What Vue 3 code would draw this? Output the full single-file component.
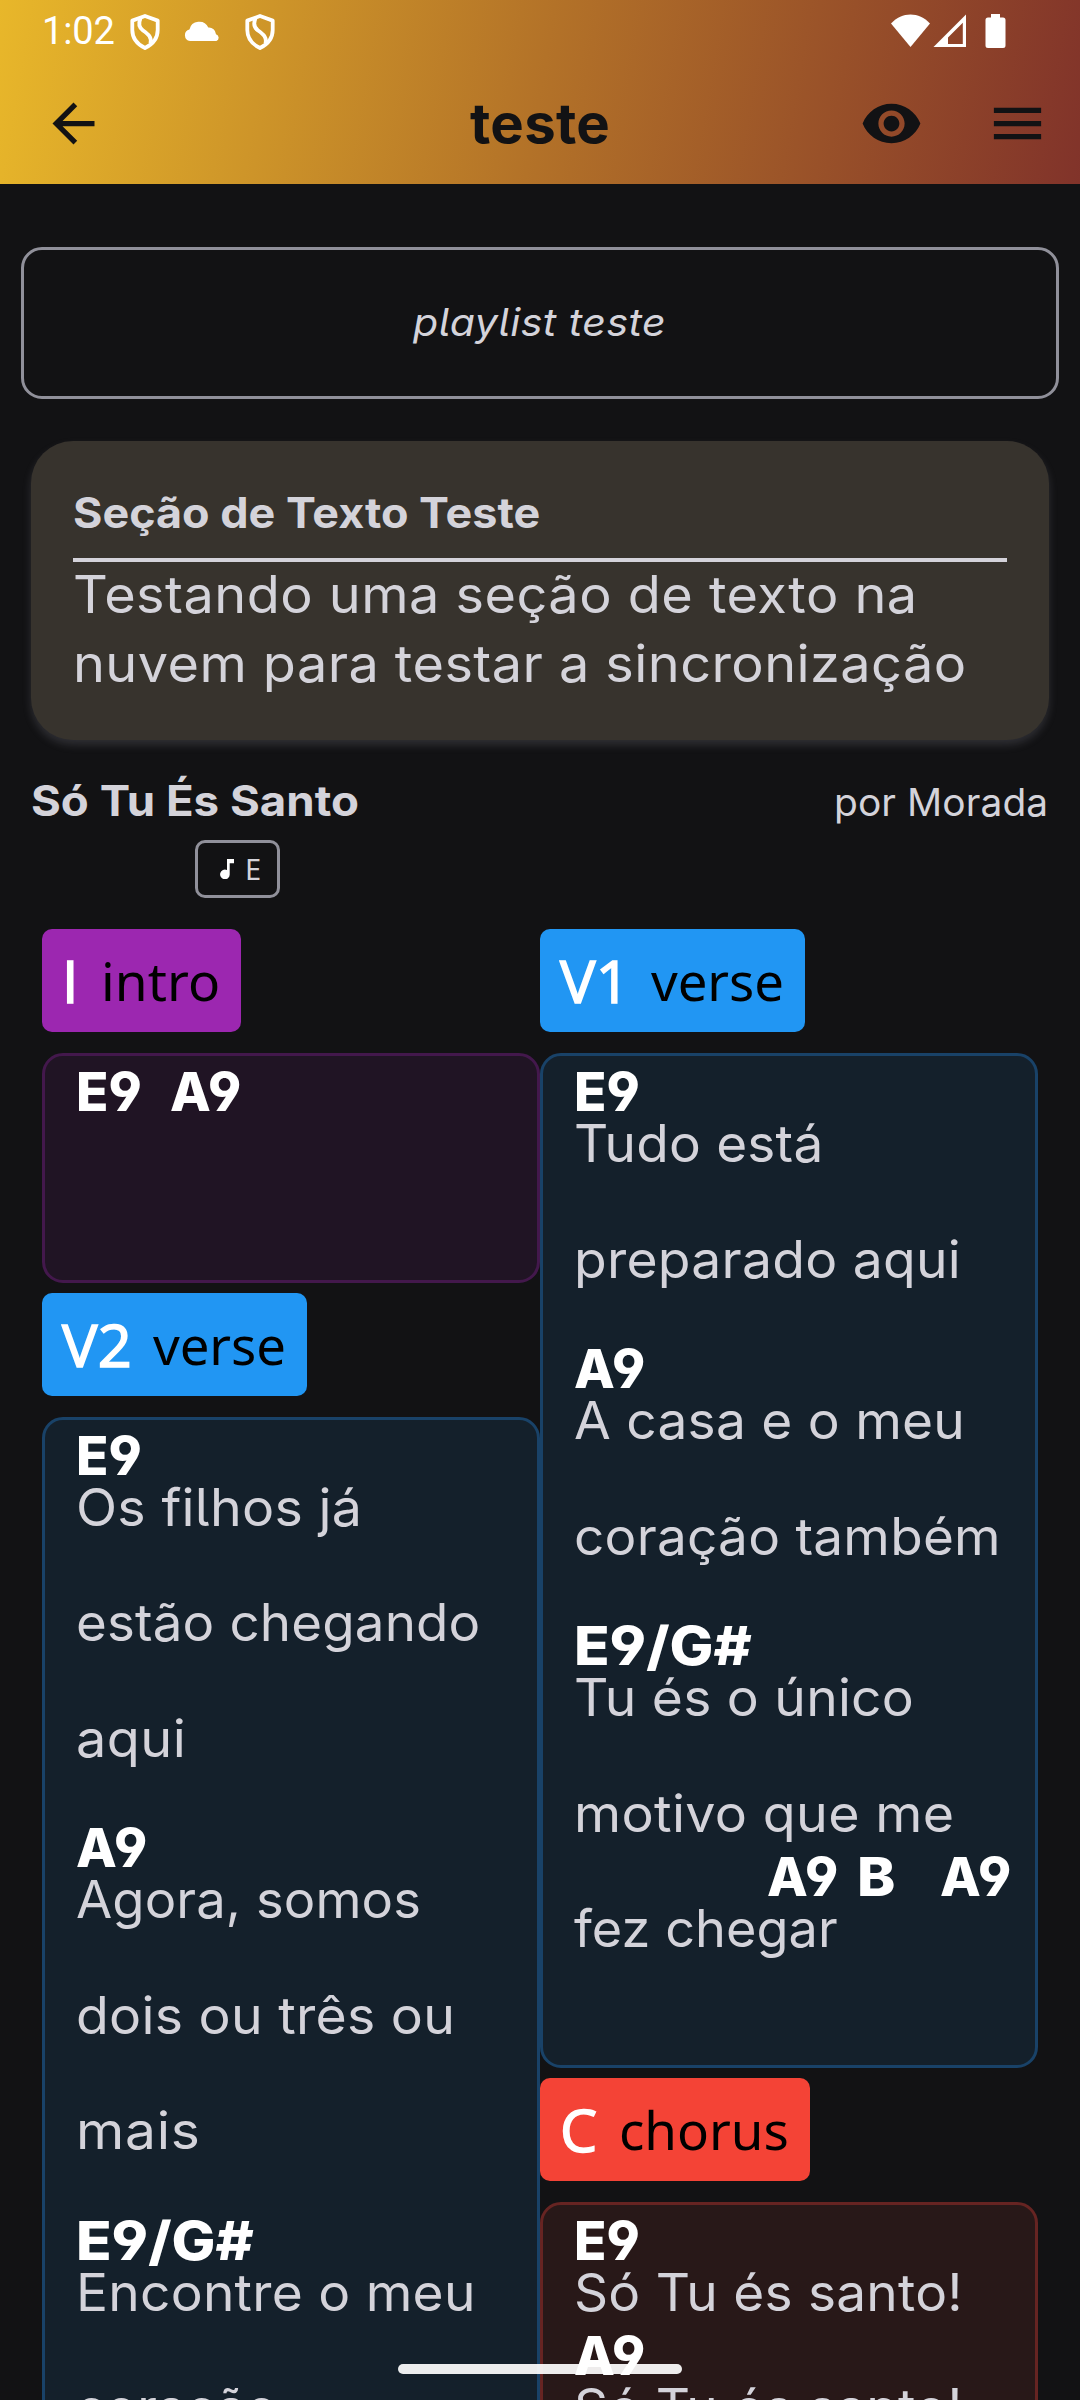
<script setup>
// Fits a line of text to the given glyph span in pixels. Part of the
// difference is taken by the glyph width, the rest by the tracking.
const canvas = document.createElement('canvas').getContext('2d')
const vFit = {
  mounted(el, { value, modifiers }) {
    if (!value) return
    const text = el.textContent.trim()
    const cs = getComputedStyle(el)
    canvas.font = `${cs.fontStyle} ${cs.fontWeight} ${cs.fontSize} ${cs.fontFamily}`
    const m = canvas.measureText(text)
    const bearings = m.width - (m.actualBoundingBoxRight + m.actualBoundingBoxLeft)
    const advance = el.getBoundingClientRect().width
    const ink = advance - bearings
    const share = text.length === 1 || modifiers.wide ? 1 : modifiers.track ? 0 : 0.75
    const scale = 1 + (value / ink - 1) * share
    const spacing = text.length === 1 ? 0 : (value / scale - ink) / (text.length - 1)
    const box = advance + spacing * text.length
    el.style.letterSpacing = `${spacing.toFixed(3)}px`
    el.style.transform = `scaleX(${scale.toFixed(4)})`
    el.style.marginRight = `${(box * (scale - 1) - spacing * scale).toFixed(3)}px`
  },
}

const E9 = { name: 'E9', width: 61.5, gap: 0 }
const A9 = { name: 'A9', width: 69, gap: 0 }
const E9G = { name: 'E9/G#', width: 174.5, gap: 0 }
const row = (lyric, width, chords = []) => ({ lyric, width, chords })

const columns = [
  [
    {
      code: 'I', codeWidth: 0, name: 'intro', nameWidth: 113, tone: 'purple', size: 199,
      paragraphs: [[row('', 0, [E9, { ...A9, gap: 28 }])]],
    },
    {
      code: 'V2', codeWidth: 67, name: 'verse', nameWidth: 131, tone: 'blue', size: 265,
      paragraphs: [
        [row('Os filhos já', 279.5, [E9]), row('estão chegando', 400), row('aqui', 105)],
        [row('Agora, somos', 341.5, [A9]), row('dois ou três ou', 373), row('mais', 117)],
        [row('Encontre o meu', 391.5, [E9G]), row('coração', 197)],
      ],
    },
  ],
  [
    {
      code: 'V1', codeWidth: 57, name: 'verse', nameWidth: 131, tone: 'blue', size: 265,
      paragraphs: [
        [row('Tudo está', 244, [E9]), row('preparado aqui', 380)],
        [row('A casa e o meu', 386, [A9]), row('coração também', 421)],
        [
          row('Tu és o único', 335.5, [E9G]),
          row('motivo que me', 373.5),
          row('fez chegar', 263, [{ ...A9, gap: 193 }, { name: 'B', width: 33.5, gap: 19 }, { ...A9, gap: 44 }]),
        ],
      ],
    },
    {
      code: 'C', codeWidth: 0, name: 'chorus', nameWidth: 165.5, tone: 'red', size: 270,
      paragraphs: [[row('Só Tu és santo!', 382.5, [E9]), row('Só Tu és santo!', 382.5, [A9])]],
    },
  ],
]
</script>

<template>
  <div class="screen">
    <header class="header">
      <div class="status">
        <div class="time"><span v-fit.track="68.5">1:02</span></div>
        <svg class="shield" viewBox="0 0 30 36">
          <path d="M15 2 2.300 6.600V16c0 8 5 14.300 12.700 18C22.700 30.300 27.700 24 27.700 16V6.600Z" />
          <path d="M10.500 4.500C8 10 9 13.500 13 16.500c5.500 4 9 6.500 7.500 13" />
        </svg>
        <svg class="cloud" viewBox="0 0 36 20">
          <path d="M6 20a5.800 5.800 0 0 1-.6-11.400A10 10 0 0 1 24.300 6.600 7 7 0 0 1 32 13.200 3.600 3.600 0 0 1 32.400 20Z" />
        </svg>
        <svg class="shield" viewBox="0 0 30 36">
          <path d="M15 2 2.300 6.600V16c0 8 5 14.300 12.700 18C22.700 30.300 27.700 24 27.700 16V6.600Z" />
          <path d="M10.500 4.500C8 10 9 13.500 13 16.500c5.500 4 9 6.500 7.500 13" />
        </svg>
        <svg class="system" viewBox="0 0 115 35">
          <path d="M0 9.500C11-2.500 28-2.500 39 9.500L19.500 33Z" />
          <path fill-rule="evenodd" d="M42.500 33 75 .500V33ZM57 23.500V30H71.800V8.700Z" />
          <path d="M100 0h9v3.500h3a2.500 2.500 0 0 1 2.500 2.500v25.500a2.500 2.500 0 0 1-2.500 2.500H97a2.500 2.500 0 0 1-2.500-2.500V6A2.500 2.500 0 0 1 97 3.500h3Z" />
        </svg>
      </div>
      <div class="toolbar">
        <svg class="icon" viewBox="0 0 24 24">
          <path d="M20 11H7.830l5.590-5.590L12 4l-8 8 8 8 1.410-1.410L7.830 13H20v-2z" />
        </svg>
        <h1 class="title"><span v-fit="138">teste</span></h1>
        <div class="actions">
          <svg class="icon" viewBox="0 0 24 24">
            <path d="M12 4.500C7 4.500 2.730 7.610 1 12c1.730 4.390 6 7.500 11 7.500s9.270-3.110 11-7.500c-1.730-4.390-6-7.500-11-7.500zM12 17c-2.760 0-5-2.240-5-5s2.240-5 5-5 5 2.240 5 5-2.240 5-5 5zm0-8c-1.660 0-3 1.340-3 3s1.340 3 3 3 3-1.340 3-3-1.340-3-3-3z" />
          </svg>
          <svg class="icon" viewBox="0 0 24 24">
            <path d="M3 18h18v-2H3v2zm0-5h18v-2H3v2zm0-7v2h18V6H3z" />
          </svg>
        </div>
      </div>
    </header>

    <div class="description"><span v-fit="251.5">playlist teste</span></div>

    <section class="note">
      <h2><span v-fit.wide="465">Seção de Texto Teste</span></h2>
      <p><span v-fit="838">Testando uma seção de texto na</span></p>
      <p><span v-fit="888">nuvem para testar a sincronização</span></p>
    </section>

    <div class="song">
      <h2><span v-fit.wide="326">Só Tu És Santo</span></h2>
      <p><span v-fit="209.5">por Morada</span></p>
    </div>
    <div class="key">
      <svg viewBox="0 0 14 20"><path d="M7 0h7v4.200H9.700v11A4.800 4.800 0 1 1 7 11.100Z" /></svg>
      <span>E</span>
    </div>

    <main class="columns">
      <div v-for="(column, c) in columns" :key="c" class="column">
        <template v-for="part in column" :key="part.code">
          <div class="tag" :class="part.tone" :style="{ width: part.size + 'px' }">
            <span v-fit="part.codeWidth" class="code">{{ part.code }}</span>
            <span v-fit="part.nameWidth" class="name">{{ part.name }}</span>
          </div>
          <article class="part" :class="part.tone">
            <div v-for="(paragraph, p) in part.paragraphs" :key="p" class="paragraph">
              <div v-for="(line, l) in paragraph" :key="l" class="row">
                <div class="chords">
                  <span v-for="(chord, k) in line.chords" :key="k" class="chord" :style="{ paddingLeft: chord.gap + 'px' }"><b v-fit.wide="chord.width">{{ chord.name }}</b></span>
                </div>
                <div class="lyric"><span v-fit="line.width">{{ line.lyric }}</span></div>
              </div>
            </div>
          </article>
        </template>
      </div>
    </main>

    <div class="home"></div>
  </div>
</template>

<style>
body {
  background: #121214;
}
</style>

<style scoped>
.screen {
  position: relative;
  width: 1080px;
  height: 2400px;
  overflow: hidden;
  background: #121214;
  color: #d4d3da;
  font-family: Inter, 'Noto Sans', sans-serif;
  font-feature-settings: 'cv04' 1, 'cv05' 1;
  font-variant-ligatures: no-contextual;
}
h1,
h2,
p {
  margin: 0;
}
span,
b {
  display: inline-block;
  white-space: nowrap;
  transform-origin: 0 50%;
}
svg {
  display: block;
  flex: none;
}
.header {
  height: 184px;
  background: linear-gradient(99.700deg, #e8b72a 0%, #b37228 50%, #81332a 100%);
}
.status {
  display: flex;
  align-items: flex-start;
  height: 62px;
  padding: 0 74px 0 42px;
  box-sizing: border-box;
  fill: #fff;
}
.time {
  width: 88px;
  flex: none;
  margin-top: 9px;
  font: 400 38px/44px Roboto, sans-serif;
  color: #fff;
}
.shield {
  width: 30px;
  height: 36px;
  margin-top: 14px;
  fill: none;
  stroke: #fff;
  stroke-width: 3.800;
  stroke-linejoin: round;
}
.cloud {
  width: 36px;
  height: 20px;
  margin: 21px 25px 0 24px;
}
.system {
  width: 115px;
  height: 35px;
  margin: 14px 0 0 auto;
}
.toolbar {
  display: grid;
  grid-template-columns: 1fr auto 1fr;
  align-items: center;
  height: 122px;
  padding: 0 31px 0 42px;
  fill: #121214;
  color: #121214;
}
.icon {
  width: 63px;
  height: 63px;
}
.title {
  margin-left: -11px;
  font-size: 55px;
  font-weight: 700;
  line-height: 121px;
}
.actions {
  display: flex;
  justify-content: flex-end;
  gap: 63px;
}
.description {
  display: flex;
  align-items: center;
  justify-content: center;
  height: 152px;
  margin: 63px 21px 0;
  padding: 0 2px 3px 0;
  box-sizing: border-box;
  border: 3px solid #90909a;
  border-radius: 21px;
  font-size: 38.500px;
  font-style: italic;
}
.note {
  height: 299px;
  margin: 42px 31px 0;
  padding: 42px 42px 0;
  box-sizing: border-box;
  border-radius: 42px;
  background: #37332d;
  box-shadow: 0 5px 9px rgba(140, 140, 150, 0.24);
}
.note h2 {
  height: 79px;
  box-sizing: border-box;
  border-bottom: 4px solid #d4d3da;
  font-size: 42px;
  font-weight: 700;
  line-height: 60px;
}
.note p {
  font-size: 51.500px;
  line-height: 69px;
}
.note h2 + p {
  margin-top: -2px;
}
.song {
  display: flex;
  justify-content: space-between;
  align-items: baseline;
  height: 100px;
  padding: 0 32px 0 31px;
}
.song h2 {
  font-size: 42px;
  font-weight: 700;
  line-height: 121px;
}
.song p {
  font-size: 38.500px;
}
.key {
  display: flex;
  align-items: center;
  width: 85px;
  height: 58px;
  margin-left: 195px;
  padding-left: 22px;
  box-sizing: border-box;
  border: 3px solid #90909a;
  border-radius: 10px;
  font: 400 29px/40px 'Noto Sans', sans-serif;
}
.key svg {
  width: 14px;
  height: 20px;
  margin-right: 11px;
  fill: #fff;
}
.columns {
  display: flex;
  align-items: flex-start;
  padding: 31px 42px 0;
}
.column {
  width: 498px;
  flex: none;
}
.tag {
  display: flex;
  align-items: center;
  justify-content: space-between;
  height: 103px;
  padding: 0 21px 0 20px;
  box-sizing: border-box;
  border-radius: 10px;
  font-family: 'Noto Sans', sans-serif;
  color: #000;
}
.code {
  font-family: 'Open Sans', 'Noto Sans', sans-serif;
  font-size: 59px;
  font-weight: 400;
  line-height: 103px;
  color: #fff;
  -webkit-text-stroke: 1.600px #fff;
}
.name {
  font-size: 53px;
  line-height: 103px;
}
.tag.purple {
  background: #9c27b0;
}
.tag.blue {
  background: #2196f3;
}
.tag.red {
  background: #f44336;
}
.part {
  margin: 21px 0 10px;
  padding: 10px 0 52px 31px;
  border: 3px solid;
  border-radius: 21px;
}
.part.purple {
  border-color: #43184c;
  background: #201424;
}
.part.blue {
  border-color: #194268;
  background: #14202b;
}
.part.red {
  border-color: #662422;
  background: #281818;
}
.paragraph {
  margin-bottom: 46px;
}
.row {
  height: 115.500px;
}
.chords {
  display: flex;
  height: 50px;
  font-size: 53.500px;
  line-height: 51px;
  color: #fff;
}
.chord b {
  font-weight: 800;
}
.lyric {
  height: 55px;
  font-size: 52px;
  line-height: 55px;
}
.home {
  position: absolute;
  left: 398px;
  bottom: 26px;
  width: 284px;
  height: 10px;
  border-radius: 5px;
  background: rgba(255, 255, 255, 0.92);
}
</style>
